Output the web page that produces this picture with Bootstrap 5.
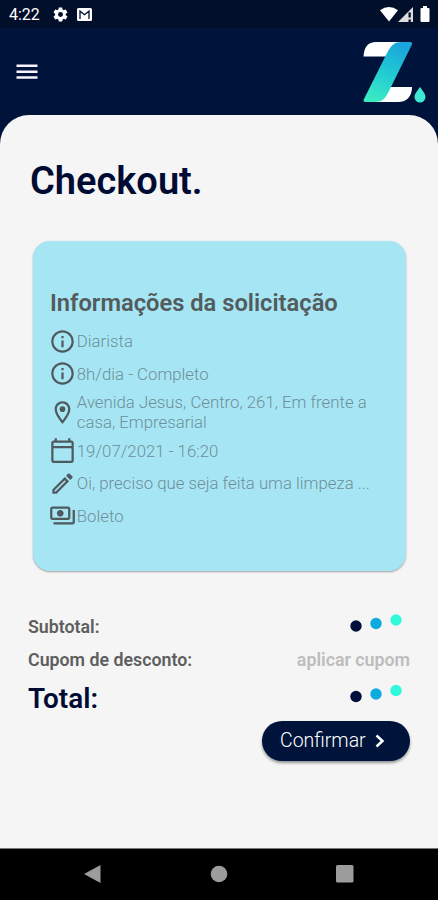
<!DOCTYPE html>
<html lang="pt-BR">
<head>
<meta charset="utf-8">
<meta name="viewport" content="width=device-width, initial-scale=1">
<title>Checkout</title>
<link href="https://cdn.jsdelivr.net/npm/bootstrap@5.3.0/dist/css/bootstrap.min.css" rel="stylesheet">
<style>
body{font-family:Roboto,"Liberation Sans",sans-serif;background:#00133b;height:900px;overflow:hidden}
svg{display:block;flex:none}
.statusbar{height:28px;background:#010f2a;color:#fff;font-size:16px;padding:0 8px 0 9px}
.clock{line-height:28px;padding-top:2px;width:43px}
.battery{margin-left:6px}
.topbar{height:87px;padding:1px 12px 0 14px}
.sheet{background:#f5f5f5;border-radius:29px 29px 0 0;padding:42px 28px 0}
.page-title{font-size:38px;font-weight:600;line-height:48px;color:#000b33;padding-left:2px}
.info-card{background:#a6e6f4;border:0;border-radius:17px;height:330px;margin:36px 4px 0 5px;padding:48px 17px 0;box-shadow:0 1px 2px rgba(0,0,0,.35)}
.info-title{font-size:23.7px;font-weight:600;line-height:28px;color:#535b5d}
.info-row{color:#6f8e99;font-size:16.8px;font-weight:300;line-height:20px;min-height:32.4px;white-space:nowrap}
.info-row svg{fill:#4e5a5e;margin-left:-.6px;margin-right:.4px}
.address-row{min-height:45px}
.totals{margin-top:40px}
.sum-row{height:33px;font-size:17.8px;font-weight:600;color:#5e5e5e}
.sum-row span,.total-row span{transform:none}
.coupon{color:#bdbdbd}
.total-row{height:44px;font-size:27.900px;font-weight:600;line-height:42px;color:#000b33}
.loader{margin-bottom:12px}
.confirm{background:#00133b;color:#fff;width:148px;height:40px;border-radius:20px;font-size:19.5px;font-weight:300;box-shadow:0 2px 3px rgba(0,0,0,.4);padding:0 0 0 17px}
.sysnav{height:52px;background:#000;border-top:1px solid #777;fill:#9c9c9c;padding:0 84px 1px}
</style>
</head>
<body class="d-flex flex-column">
<div class="statusbar d-flex align-items-center">
  <span class="clock">4:22</span>
  <svg width="17" height="17" viewBox="0 0 24 24" fill="#fff"><path d="M19.4 13c.1-.3.1-.7.1-1s0-.7-.1-1l2.1-1.600c.2-.2.2-.4.1-.7l-2-3.400c-.1-.2-.4-.3-.6-.2l-2.500 1c-.5-.4-1.100-.7-1.700-1l-.4-2.600c0-.3-.2-.5-.5-.5h-4c-.3 0-.5.2-.5.5L9.100 5.100c-.6.3-1.200.6-1.700 1l-2.500-1c-.2-.1-.5 0-.6.2l-2 3.400c-.1.3-.1.5.1.7L4.500 11c0 .3-.1.7-.1 1s0 .7.1 1l-2.100 1.600c-.2.2-.2.4-.1.7l2 3.400c.1.2.4.3.6.2l2.500-1c.5.4 1.100.7 1.700 1l.4 2.600c0 .3.2.5.5.5h4c.3 0 .5-.2.5-.5l.4-2.600c.6-.3 1.200-.6 1.700-1l2.500 1c.2.1.5 0 .6-.2l2-3.400c.1-.3.1-.5-.1-.7zM12 15.500a3.500 3.500 0 110-7 3.500 3.500 0 010 7z"/></svg>
  <svg class="ms-2" width="15" height="13" viewBox="0 0 15 13"><rect width="15" height="13" rx="1.500" fill="#fff"/><path d="M3 11V3.200l4.500 3.500L12 3.200V11" fill="none" stroke="#010f2a" stroke-width="1.300"/></svg>
  <svg class="ms-auto" width="18" height="15" viewBox="0 0 18 15"><path d="M0 3.200Q9-3.200 18 3.200L9 14.500z" fill="#fff"/></svg>
  <svg width="16" height="15" viewBox="0 0 16 15"><path d="M0 15L15 0v15z" fill="#ddd"/><path d="M10.500 5.500h2.300v5h-2.300zM10.500 12.500h2.300V15h-2.300z" fill="#010f2a"/></svg>
  <svg class="battery" width="10" height="16" viewBox="0 0 10 16"><path d="M3 0h4v2h1.500q1 0 1 1v12q0 1-1 1h-7q-1 0-1-1V3q0-1 1-1H3z" fill="#fff"/></svg>
</div>
<header class="topbar d-flex align-items-center justify-content-between">
  <svg width="26" height="26" viewBox="0 0 26 26" fill="#f5f4ff"><path d="M2.500 5.500h21V8h-21zM2.500 11.500h21V14h-21zM2.500 17.300h21v2.500h-21z"/></svg>
  <svg width="63" height="62" viewBox="0 0 63 62">
    <defs><linearGradient id="aqua" x1=".7" y1="0" x2=".3" y2="1"><stop offset="0" stop-color="#1ba5dc"/><stop offset=".5" stop-color="#20c9d3"/><stop offset="1" stop-color="#3aeac4"/></linearGradient></defs>
    <path d="M.5 15.500C1 6 5 1 13 1h28L26 15.500z" fill="#fff"/>
    <path d="M22 46h27c0 9-5 15-14 15H8z" fill="#fff"/>
    <path d="M47 1c2 0 2.500 1 1.700 3L26 50c-4 8-7 11-14 11H2.500C.5 61 0 60 1 58L24 12C28 4 32 1 38 1z" fill="url(#aqua)"/>
    <path d="M57 46c3 4.500 5.500 7 5.500 10a5.500 5.500 0 01-11 0c0-3 2.500-5.500 5.500-10z" fill="#3fe8d2"/>
  </svg>
</header>
<main class="sheet flex-grow-1">
  <h1 class="page-title mb-0">Checkout.</h1>
  <section class="card info-card">
    <h2 class="info-title mb-0">Informações da solicitação</h2>
    <div class="info-row d-flex align-items-center mt-2"><svg width="27" height="27" viewBox="0 0 24 24"><path d="M11 7h2v2h-2zm0 4h2v6h-2zm1-9C6.480 2 2 6.480 2 12s4.480 10 10 10 10-4.480 10-10S17.520 2 12 2zm0 18c-4.410 0-8-3.590-8-8s3.590-8 8-8 8 3.590 8 8-3.590 8-8 8z"/></svg><span>Diarista</span></div>
    <div class="info-row d-flex align-items-center"><svg width="27" height="27" viewBox="0 0 24 24"><path d="M11 7h2v2h-2zm0 4h2v6h-2zm1-9C6.480 2 2 6.480 2 12s4.480 10 10 10 10-4.480 10-10S17.520 2 12 2zm0 18c-4.410 0-8-3.590-8-8s3.590-8 8-8 8 3.590 8 8-3.590 8-8 8z"/></svg><span>8h/dia - Completo</span></div>
    <div class="info-row address-row d-flex align-items-center"><svg width="27" height="27" viewBox="0 0 24 24"><path d="M12 2C8.130 2 5 5.130 5 9c0 5.250 7 13 7 13s7-7.750 7-13c0-3.870-3.130-7-7-7zM7 9c0-2.760 2.240-5 5-5s5 2.240 5 5c0 2.880-2.880 7.190-5 9.880C9.920 16.210 7 11.850 7 9z"/><circle cx="12" cy="9" r="2.500"/></svg><span>Avenida Jesus, Centro, 261, Em frente a<br>casa, Empresarial</span></div>
    <div class="info-row d-flex align-items-center"><svg width="27" height="27" viewBox="0 0 24 24"><path d="M20 3h-1V1h-2v2H7V1H5v2H4c-1.100 0-2 .9-2 2v16c0 1.100.9 2 2 2h16c1.100 0 2-.9 2-2V5c0-1.100-.9-2-2-2zm0 18H4V10h16v11zm0-13H4V5h16v3z"/></svg><span>19/07/2021 - 16:20</span></div>
    <div class="info-row d-flex align-items-center"><svg width="27" height="27" viewBox="0 0 24 24"><path d="M14.060 9.020l.92.92L5.920 19H5v-.92l9.060-9.060M17.660 3c-.25 0-.51.1-.7.29l-1.830 1.830 3.750 3.750 1.830-1.830c.39-.39.39-1.020 0-1.410l-2.340-2.340c-.2-.2-.45-.29-.71-.29zm-3.600 3.190L3 17.250V21h3.750L17.810 9.940l-3.750-3.750z"/></svg><span>Oi, preciso que seja feita uma limpeza ...</span></div>
    <div class="info-row d-flex align-items-center"><svg width="27" height="27" viewBox="0 0 24 24"><path d="M19 14V6c0-1.100-.9-2-2-2H3c-1.100 0-2 .9-2 2v8c0 1.100.9 2 2 2h14c1.100 0 2-.9 2-2zm-2 0H3V6h14v8zm-7-7c-1.660 0-3 1.340-3 3s1.340 3 3 3 3-1.340 3-3-1.340-3-3-3zm13 0v11c0 1.100-.9 2-2 2H4v-2h17V7h2z"/></svg><span>Boleto</span></div>
  </section>
  <section class="totals">
    <div class="sum-row d-flex align-items-center justify-content-between"><span>Subtotal:</span>
      <svg class="loader me-2" width="52" height="26" viewBox="0 0 52 26"><circle cx="6" cy="17" r="5.700" fill="#00103a"/><circle cx="26" cy="14.500" r="5.700" fill="#0caade"/><circle cx="46" cy="11" r="5.700" fill="#33f9dc"/></svg></div>
    <div class="sum-row d-flex align-items-center justify-content-between"><span>Cupom de desconto:</span><span class="coupon">aplicar cupom</span></div>
    <div class="total-row d-flex align-items-center justify-content-between"><span>Total:</span>
      <svg class="loader me-2" width="52" height="26" viewBox="0 0 52 26"><circle cx="6" cy="16.500" r="5.700" fill="#00103a"/><circle cx="26" cy="14" r="5.700" fill="#0caade"/><circle cx="46" cy="10.500" r="5.700" fill="#33f9dc"/></svg></div>
  </section>
  <button class="btn confirm d-flex align-items-center ms-auto" type="button">Confirmar<svg class="ms-2" width="12" height="16" viewBox="0 0 12 16"><path d="M2.500 2.500L8.500 8l-6 5.500" fill="none" stroke="#fff" stroke-width="2.500"/></svg></button>
</main>
<nav class="sysnav d-flex align-items-center justify-content-between">
  <svg width="17" height="18" viewBox="0 0 17 18"><path d="M0 9L16.500 0v18z"/></svg>
  <svg width="18" height="18" viewBox="0 0 18 18"><circle cx="9" cy="9" r="8.300"/></svg>
  <svg width="18" height="18" viewBox="0 0 18 18"><rect width="17.500" height="17.500" rx="1.500"/></svg>
</nav>
<script src="https://cdn.jsdelivr.net/npm/bootstrap@5.3.0/dist/js/bootstrap.bundle.min.js"></script>
</body>
</html>
